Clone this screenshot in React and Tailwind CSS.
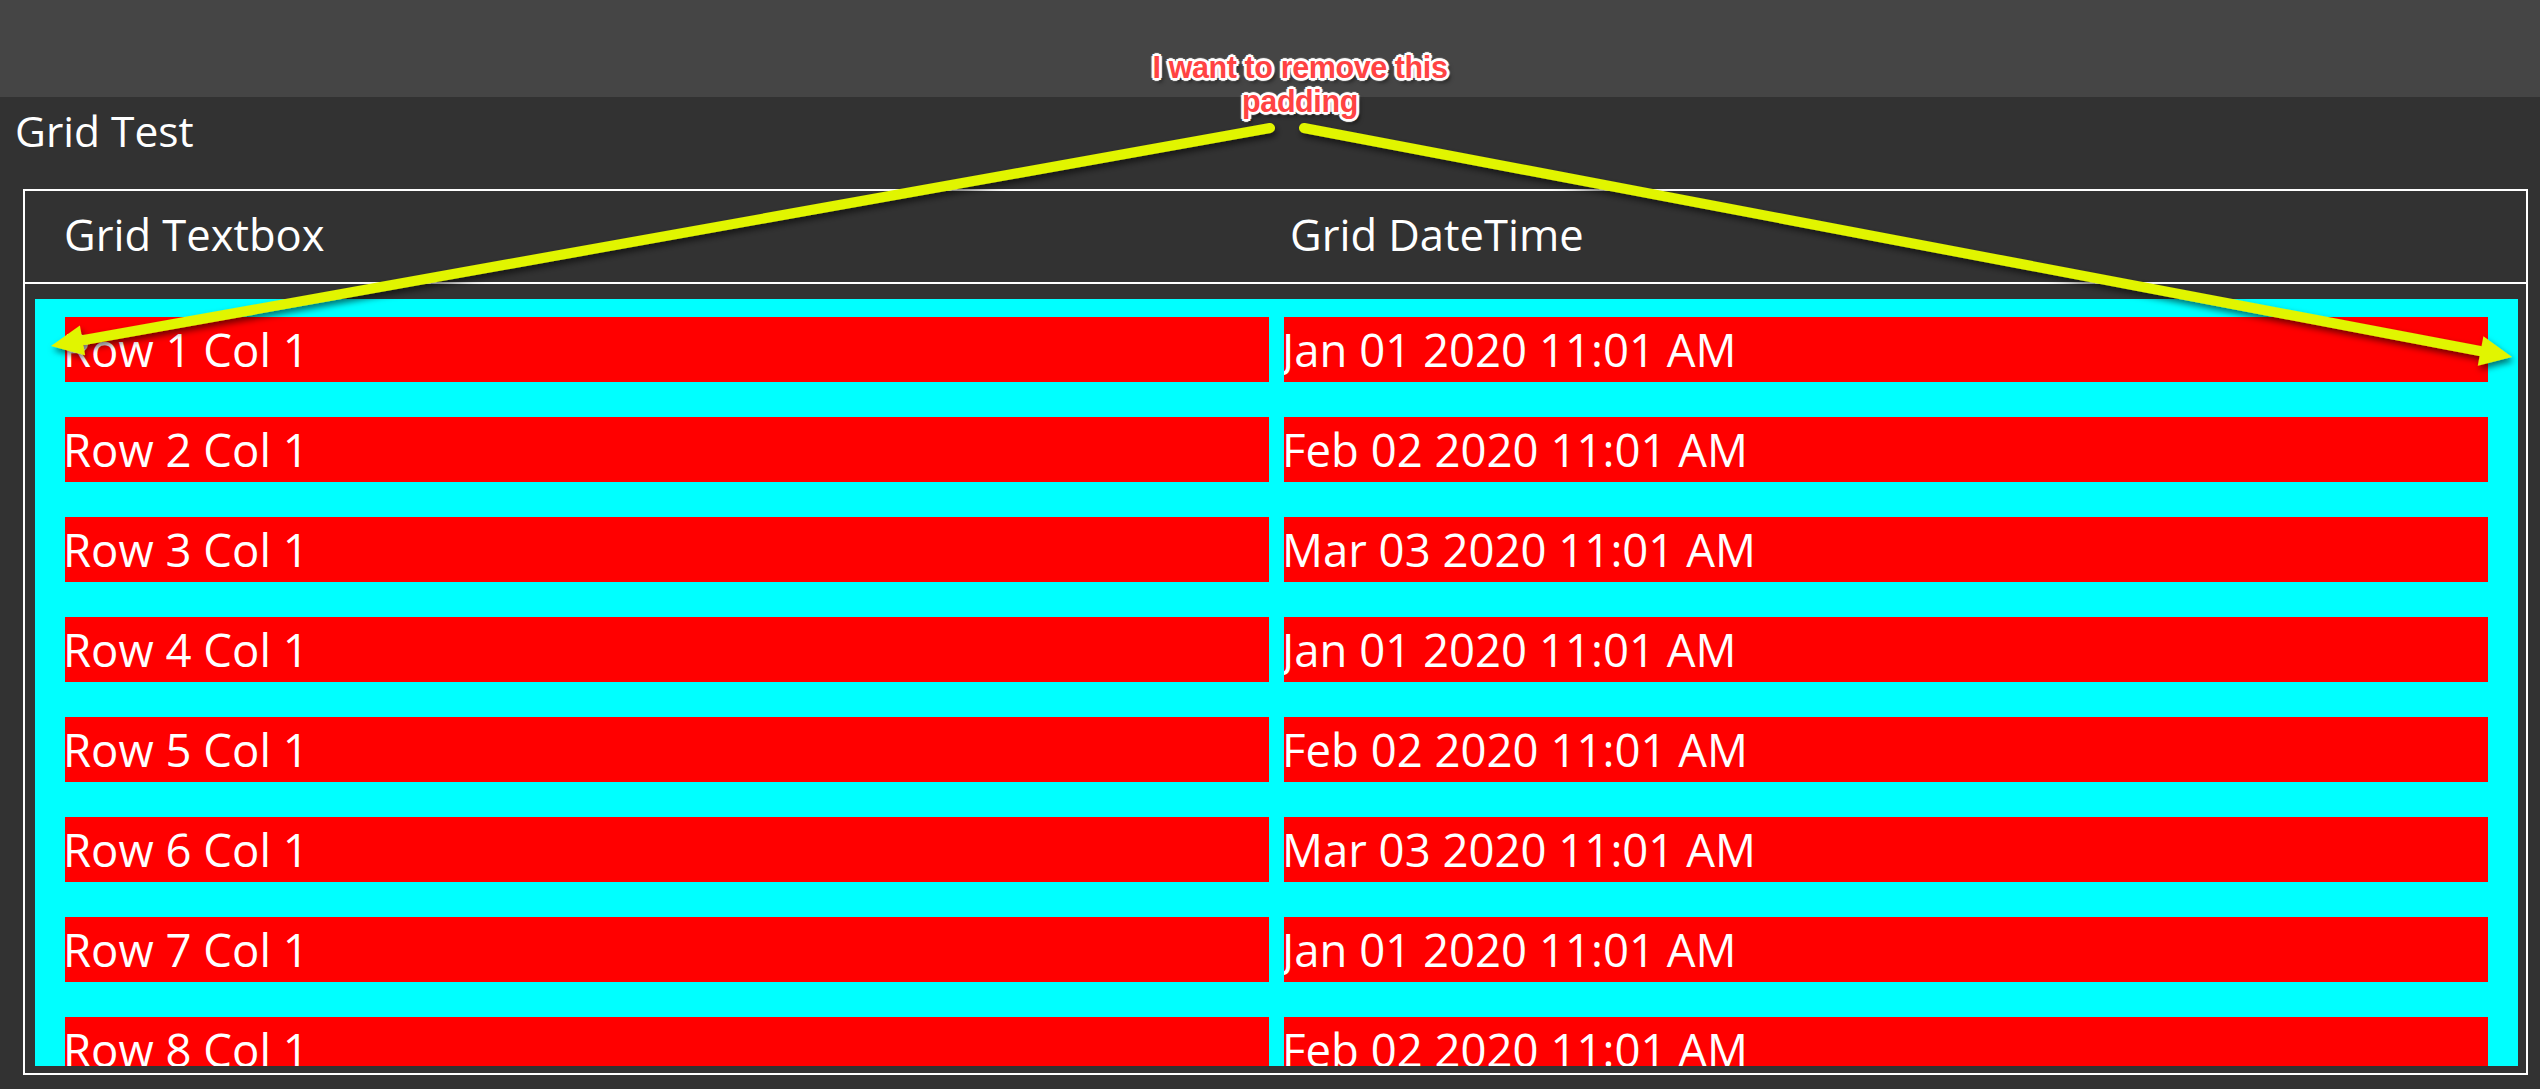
const ROWS = [
  ['Row 1 Col 1', 'Jan 01 2020 11:01 AM'],
  ['Row 2 Col 1', 'Feb 02 2020 11:01 AM'],
  ['Row 3 Col 1', 'Mar 03 2020 11:01 AM'],
  ['Row 4 Col 1', 'Jan 01 2020 11:01 AM'],
  ['Row 5 Col 1', 'Feb 02 2020 11:01 AM'],
  ['Row 6 Col 1', 'Mar 03 2020 11:01 AM'],
  ['Row 7 Col 1', 'Jan 01 2020 11:01 AM'],
  ['Row 8 Col 1', 'Feb 02 2020 11:01 AM'],
  ['Row 9 Col 1', 'Mar 03 2020 11:01 AM'],
]

const FONT = "font-['Open_Sans','Noto_Sans',sans-serif]"

function Cell({ children }) {
  return (
    <div className="h-[65px] bg-[#ff0000] flex items-center overflow-hidden">
      <span className="text-[45.5px] leading-none text-white whitespace-nowrap -ml-[2px]">{children}</span>
    </div>
  )
}

function Arrows() {
  return (
    <svg className="absolute inset-0 w-full h-full pointer-events-none" viewBox="0 0 2540 1089">
      <defs>
        <filter id="arrowShadow" x="-10%" y="-50%" width="120%" height="200%">
          <feDropShadow dx="2" dy="4" stdDeviation="3" floodColor="#000" floodOpacity="0.55" />
        </filter>
      </defs>
      <g filter="url(#arrowShadow)" fill="#e1f500" stroke="#e1f500">
        {/* left */}
        <line x1="1270" y1="128" x2="84" y2="340" strokeWidth="10" strokeLinecap="round" />
        <polygon points="51,346 85.1,355.2 79.9,325.6" stroke="none" />
        {/* right */}
        <line x1="1304" y1="128" x2="2480" y2="351" strokeWidth="10" strokeLinecap="round" />
        <polygon points="2512,357 2477.8,365.8 2483.4,336.3" stroke="none" />
      </g>
    </svg>
  )
}

export default function App() {
  return (
    <div className={`relative h-[1089px] overflow-hidden bg-[#323232] text-white ${FONT}`}>
      <div className="h-[97px] bg-[#454545]" />

      {/* page title */}
      <div className="h-[92px] pt-[13px] pl-[15px]">
        <h1 className="text-[42.5px] leading-none font-normal">Grid Test</h1>
      </div>

      {/* grid */}
      <div className="ml-[23px] mr-[12px] h-[886px] border-2 border-white flex flex-col">
        <div className="h-[93px] flex-shrink-0 border-b-2 border-white grid grid-cols-[1226px_1fr] items-center pl-[39px] pb-[3px]">
          <span className="text-[43.5px] leading-none">Grid Textbox</span>
          <span className="text-[43.5px] leading-none">Grid DateTime</span>
        </div>
        <div className="flex-1 min-h-0 pt-[15px] pb-[7px] pl-[10px] pr-[8px]">
          <div className="h-full bg-[#00ffff] overflow-hidden pt-[18px] px-[30px]">
            <div className="grid grid-cols-2 gap-x-[15px] gap-y-[35px]">
              {ROWS.map(([a, b], i) => (
                <div key={i} className="contents">
                  <Cell>{a}</Cell>
                  <Cell>{b}</Cell>
                </div>
              ))}
            </div>
          </div>
        </div>
      </div>

      {/* annotation */}
      <Arrows />
      <div
        className="absolute top-[50px] left-[1300px] -translate-x-1/2 text-center font-['Liberation_Sans',Arial,sans-serif] font-bold text-[30.5px] leading-[34px] tracking-[-0.4px] text-[#ff4343] whitespace-nowrap [text-shadow:2px_0_0_#fff,-2px_0_0_#fff,0_2px_0_#fff,0_-2px_0_#fff,2px_2px_0_#fff,-2px_-2px_0_#fff,2px_-2px_0_#fff,-2px_2px_0_#fff,3px_0_1px_#fff,-3px_0_1px_#fff,0_3px_1px_#fff,0_-3px_1px_#fff,3px_4px_4px_rgba(0,0,0,0.6)]"
      >
        I want to remove this
        <br />
        padding
      </div>
    </div>
  )
}
